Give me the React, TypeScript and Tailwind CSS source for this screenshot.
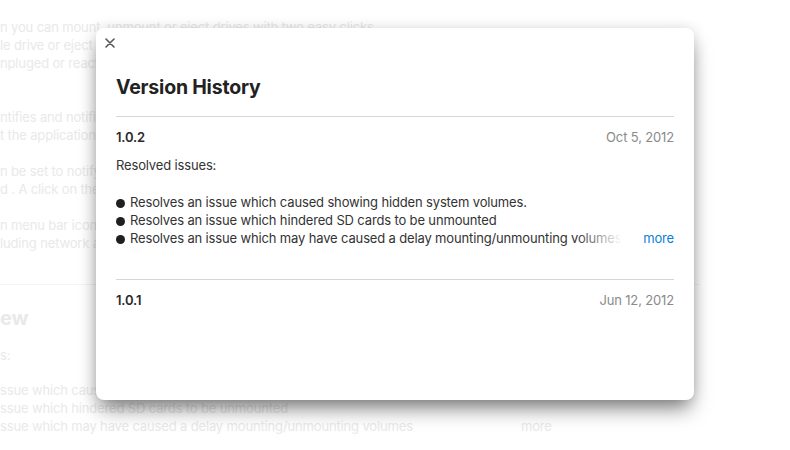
import * as React from 'react'

const bgParagraphs = [
  [
    'n you can mount, unmount or eject drives with two easy clicks.',
    'le drive or eject all of them at once from the menu.',
    'npluged or reactivated after waking up from sleep.',
  ],
  [
    'ntifies and notifies you when a new volume is mounted.',
    't the application runs quietly in the background.',
  ],
  ['n be set to notify you when a drive was unmounted', 'd . A click on the notification opens the drive.'],
  ['n menu bar icon lists all mounted volumes', 'luding network and disk image volumes.'],
]

const issues = [
  'Resolves an issue which caused showing hidden system volumes.',
  'Resolves an issue which hindered SD cards to be unmounted',
  'Resolves an issue which may have caused a delay mounting/unmounting volumes',
]

function CloseIcon() {
  return (
    <svg className="h-[10px] w-[10px]" viewBox="0 0 10 10" fill="none" stroke="#555" strokeWidth={1.6} strokeLinecap="round">
      <path d="M1 1l8 8M9 1L1 9" />
    </svg>
  )
}

function Bullet() {
  return <span className="mr-[5px] inline-block h-[9px] w-[9px] rounded-full bg-[#1f1f1f] align-[-0.5px]" />
}

function VersionRow({ version, date }: { version: string; date: string }) {
  return (
    <div className="flex h-[18px] items-center justify-between leading-[18px]">
      <span className="font-semibold text-[#2a2a2a]">{version}</span>
      <span className="text-[#8a8a8a]">{date}</span>
    </div>
  )
}

export default function App() {
  return (
    <div className="relative h-[450px] w-[790px] overflow-hidden bg-white font-['Inter',sans-serif] text-[13px] tracking-[-0.15px]">
      {/* Faded page behind the sheet */}
      <div className="pt-[18px] leading-[18px] text-[#e9e9e9]">
        <div className="flex flex-col gap-[18px]">
          {bgParagraphs.map((lines, i) => (
            <div key={i} className={i === 1 ? 'mt-[18px]' : ''}>
              {lines.map((l) => (
                <div key={l} className="whitespace-nowrap">{l}</div>
              ))}
            </div>
          ))}
        </div>
        <div className="mt-[32px] h-px w-[700px] bg-[#f4f4f4]" />
        <div className="mt-[21px] text-[20px] font-bold leading-[24px]">ew</div>
        <div className="mt-[16px]">s:</div>
        <div className="mt-[17px]">
          <div>ssue which caused showing hidden system volumes.</div>
          <div>ssue which hindered SD cards to be unmounted</div>
          <div className="flex">
            <span>ssue which may have caused a delay mounting/unmounting volumes</span>
            <span className="ml-[108px]">more</span>
          </div>
        </div>
      </div>

      {/* Version history sheet */}
      <div className="absolute left-[96px] top-[28px] h-[372px] w-[598px] rounded-[8px] bg-white px-5 shadow-[0_12px_20px_-4px_rgba(0,0,0,0.5),0_0_14px_rgba(0,0,0,0.12)]">
        <button className="-ml-[11px] mt-[10px] flex h-[10px] items-center">
          <CloseIcon />
        </button>

        <h1 className="mt-[27px] text-[19.5px] font-bold leading-[24px] tracking-[-0.2px] text-[#222]">Version History</h1>

        <div className="mt-[17px] h-px bg-[#d6d6d6]" />

        <div className="mt-[11px]">
          <VersionRow version="1.0.2" date="Oct 5, 2012" />
        </div>

        <p className="mt-[10px] h-[18px] leading-[18px] text-[#333]">Resolved issues:</p>

        <ul className="mt-[19px] leading-[18px] text-[#333]">
          {issues.map((t, i) =>
            i < issues.length - 1 ? (
              <li key={t} className="h-[18px] whitespace-nowrap">
                <Bullet />
                {t}
              </li>
            ) : (
              <li key={t} className="flex h-[18px] whitespace-nowrap">
                <span className="relative">
                  <Bullet />
                  {t}
                  <span className="absolute right-0 top-0 h-full w-[46px] bg-gradient-to-r from-white/0 to-white" />
                </span>
                <span className="ml-auto text-[#0a7fd8]">more</span>
              </li>
            ),
          )}
        </ul>

        <div className="mt-[32px] h-px bg-[#d6d6d6]" />

        <div className="mt-[11px]">
          <VersionRow version="1.0.1" date="Jun 12, 2012" />
        </div>
      </div>
    </div>
  )
}
